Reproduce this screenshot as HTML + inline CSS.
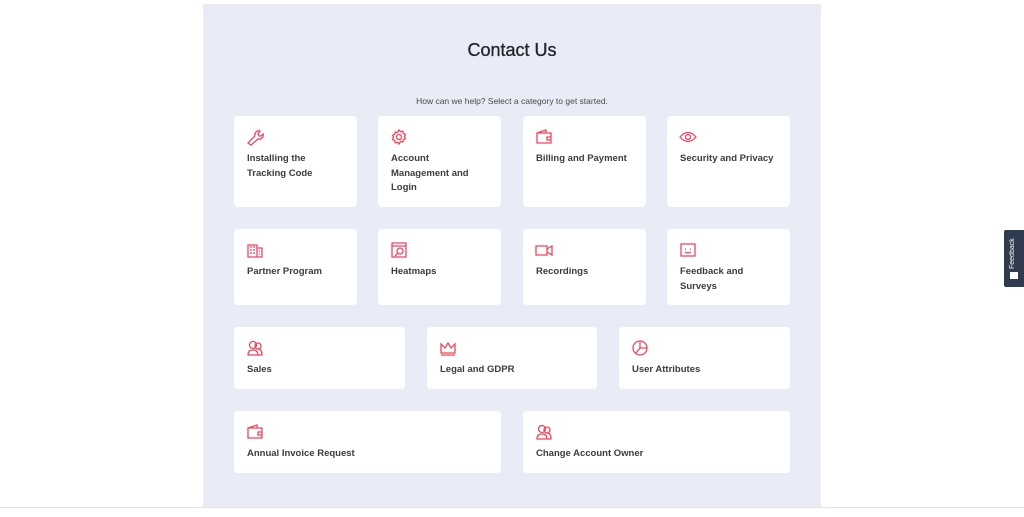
<!DOCTYPE html><html><head><meta charset="utf-8"><style>
*{margin:0;padding:0;box-sizing:border-box}
body{width:1024px;height:517px;background:#fff;font-family:"Liberation Sans",sans-serif;position:relative;overflow:hidden}
.panel{position:absolute;left:203px;top:4px;width:618px;height:504px;background:#e9ebf7}
.line{position:absolute;left:0;top:507px;width:1024px;height:1px;background:#e4e4e4}
h1{position:absolute;left:203px;width:618px;top:40px;text-align:center;font-size:18px;font-weight:normal;color:#23232b;-webkit-text-stroke:.3px #23232b}
.sub{position:absolute;left:203px;width:618px;top:96px;text-align:center;font-size:8.5px;color:#4a4a4a}
.c{position:absolute;background:#fff;border-radius:4px}
.c svg{position:absolute;left:12px;top:12px;width:18px;height:18px;fill:none;stroke:#f0455f;stroke-width:1.3}
.c span{position:absolute;left:13px;top:36px;font-size:9.5px;font-weight:bold;color:#3b3b40;line-height:14.5px}
.fb{position:absolute;left:1004px;top:230px;width:20px;height:57px;background:#2f3c4f;border-radius:2px 0 0 2px}
.fb span{position:absolute;left:5px;top:5px;writing-mode:vertical-rl;transform:rotate(180deg);font-size:7px;color:#fff;height:34px}
.fb i{position:absolute;left:6px;top:42px;width:8px;height:7px;background:#fff}
</style></head><body>
<div class="panel"></div><div class="line"></div>
<h1>Contact Us</h1>
<div class="sub">How can we help? Select a category to get started.</div>

<div class="c" style="left:234px;top:116px;width:123px;height:91px"><svg viewBox="0 0 18 18"><path d="M2 15l7-7a4 4 0 0 1 5-5l-2 3 1 2 2 0 2-2a4 4 0 0 1-5 5l-7 6z"/></svg><span>Installing the<br>Tracking Code</span></div>
<div class="c" style="left:378px;top:116px;width:123px;height:91px"><svg viewBox="0 0 18 18"><circle cx="9" cy="9" r="2.5"/><path d="M9 2l1.5 1.8 2.3-.6.5 2.3 2.2 1-1 2.1 1 2.1-2.2 1-.5 2.3-2.3-.6L9 16l-1.5-1.8-2.3.6-.5-2.3-2.2-1 1-2.1-1-2.1 2.2-1 .5-2.3 2.3.6z"/></svg><span>Account<br>Management and<br>Login</span></div>
<div class="c" style="left:523px;top:116px;width:123px;height:91px"><svg viewBox="0 0 18 18"><path d="M2 5h14v10H2zM2 5l9-3v3M12 9h4v3h-4z"/></svg><span>Billing and Payment</span></div>
<div class="c" style="left:667px;top:116px;width:123px;height:91px"><svg viewBox="0 0 18 18"><path d="M1 9q8-9 16 0q-8 9-16 0z"/><circle cx="9" cy="9" r="2.5"/></svg><span>Security and Privacy</span></div>

<div class="c" style="left:234px;top:229px;width:123px;height:76px"><svg viewBox="0 0 18 18"><path d="M2 4h9v12H2zM11 7h5v9h-5M4 6h2M7 6h2M4 9h2M7 9h2M4 12h2M7 12h2M13 10h1M13 13h1"/></svg><span>Partner Program</span></div>
<div class="c" style="left:378px;top:229px;width:123px;height:76px"><svg viewBox="0 0 18 18"><path d="M2 2h14v14H2zM2 5h14"/><circle cx="10" cy="10" r="3"/><path d="M8 12l-3 3"/></svg><span>Heatmaps</span></div>
<div class="c" style="left:523px;top:229px;width:123px;height:76px"><svg viewBox="0 0 18 18"><path d="M1 5h11v9H1zM12 8l5-3v9l-5-3"/></svg><span>Recordings</span></div>
<div class="c" style="left:667px;top:229px;width:123px;height:76px"><svg viewBox="0 0 18 18"><path d="M2 3h14v12H2zM6 8h1M11 8h1M6 11q3 2 6 0"/></svg><span>Feedback and<br>Surveys</span></div>

<div class="c" style="left:234px;top:327px;width:171px;height:62px"><svg viewBox="0 0 18 18"><circle cx="7" cy="6" r="3.5"/><circle cx="12" cy="7" r="3"/><path d="M2 16q0-5 5-5t5 5zM12 10q4 0 4 6h-4"/></svg><span>Sales</span></div>
<div class="c" style="left:427px;top:327px;width:170px;height:62px"><svg viewBox="0 0 18 18"><path d="M2 5l4 4 3-5 3 5 4-4v9H2zM2 16h14"/></svg><span>Legal and GDPR</span></div>
<div class="c" style="left:619px;top:327px;width:171px;height:62px"><svg viewBox="0 0 18 18"><circle cx="9" cy="9" r="7"/><path d="M9 2v7h7M9 9l-4 5"/></svg><span>User Attributes</span></div>

<div class="c" style="left:234px;top:411px;width:267px;height:62px"><svg viewBox="0 0 18 18"><path d="M2 5h14v10H2zM2 5l9-3v3M12 9h4v3h-4z"/></svg><span>Annual Invoice Request</span></div>
<div class="c" style="left:523px;top:411px;width:267px;height:62px"><svg viewBox="0 0 18 18"><circle cx="7" cy="6" r="3.5"/><circle cx="12" cy="7" r="3"/><path d="M2 16q0-5 5-5t5 5zM12 10q4 0 4 6h-4"/></svg><span>Change Account Owner</span></div>

<div class="fb"><span>Feedback</span><i></i></div>
</body></html>
